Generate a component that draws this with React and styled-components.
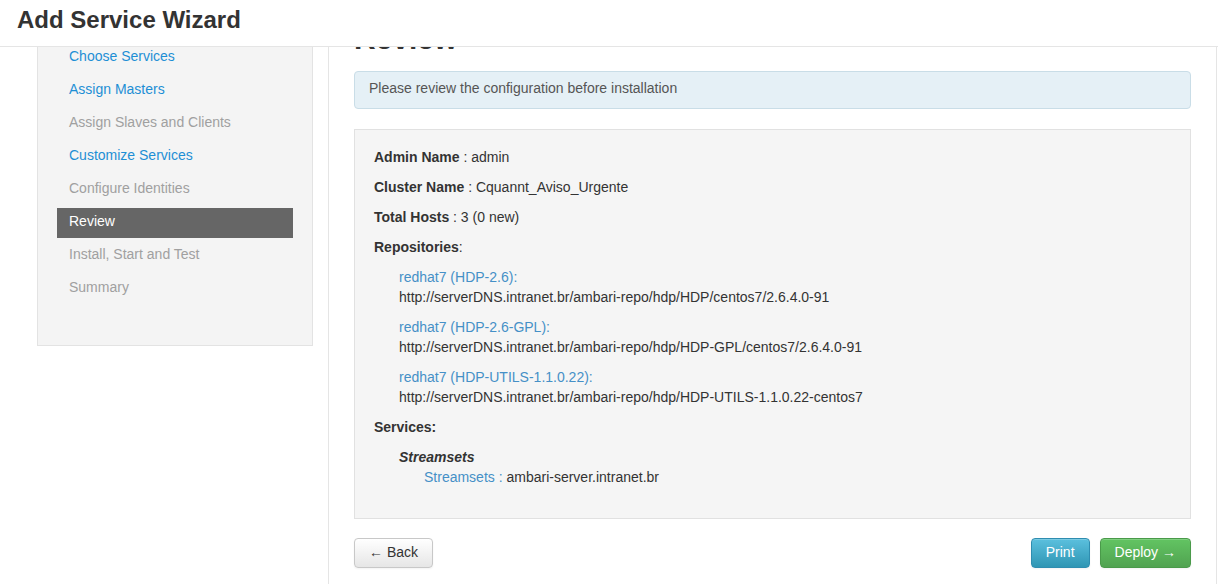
import React, { useLayoutEffect, useRef } from "react";
import styled, { createGlobalStyle } from "styled-components";

const GlobalStyle = createGlobalStyle`
  html, body {
    margin: 0;
    padding: 0;
    background: #fff;
    font-family: "Liberation Sans", Arial, sans-serif;
    font-size: 14px;
    line-height: 20px;
    color: #333;
  }
  * { box-sizing: border-box; }
`;

const steps = [
  { label: "Choose Services", state: "done" },
  { label: "Assign Masters", state: "done" },
  { label: "Assign Slaves and Clients", state: "disabled" },
  { label: "Customize Services", state: "done" },
  { label: "Configure Identities", state: "disabled" },
  { label: "Review", state: "active" },
  { label: "Install, Start and Test", state: "disabled" },
  { label: "Summary", state: "disabled" },
];

const repos = [
  {
    name: "redhat7 (HDP-2.6):",
    url: "http://serverDNS.intranet.br/ambari-repo/hdp/HDP/centos7/2.6.4.0-91",
  },
  {
    name: "redhat7 (HDP-2.6-GPL):",
    url: "http://serverDNS.intranet.br/ambari-repo/hdp/HDP-GPL/centos7/2.6.4.0-91",
  },
  {
    name: "redhat7 (HDP-UTILS-1.1.0.22):",
    url: "http://serverDNS.intranet.br/ambari-repo/hdp/HDP-UTILS-1.1.0.22-centos7",
  },
];

const App = () => {
  const scrollRef = useRef(null);

  // the wizard body is shown scrolled down a bit, under the fixed header
  useLayoutEffect(() => {
    if (scrollRef.current) scrollRef.current.scrollTop = 47;
  }, []);

  return (
    <Page>
      <GlobalStyle />
      <Header>
        <Title>Add Service Wizard</Title>
      </Header>
      <Scroller ref={scrollRef}>
        <Content>
          <Sidebar>
            <StepList>
              {steps.map((step) => (
                <Step key={step.label} state={step.state}>
                  {step.label}
                </Step>
              ))}
            </StepList>
          </Sidebar>
          <Panel>
            <Heading>Review</Heading>
            <Alert>Please review the configuration before installation</Alert>
            <ReviewBox>
              <Line>
                <b>Admin Name</b> : admin
              </Line>
              <Line>
                <b>Cluster Name</b> : Cquannt_Aviso_Urgente
              </Line>
              <Line>
                <b>Total Hosts</b> : 3 (0 new)
              </Line>
              <Line>
                <b>Repositories</b>:
              </Line>
              <Indent>
                {repos.map((repo) => (
                  <Repo key={repo.name}>
                    <RepoName>{repo.name}</RepoName>
                    <div>{repo.url}</div>
                  </Repo>
                ))}
              </Indent>
              <Line>
                <b>Services:</b>
              </Line>
              <Indent>
                <ServiceName>Streamsets</ServiceName>
                <Indent>
                  <RepoName as="span">Streamsets : </RepoName>
                  ambari-server.intranet.br
                </Indent>
              </Indent>
            </ReviewBox>
            <Actions>
              <Button>&larr; Back</Button>
              <RightActions>
                <Button variant="info">Print</Button>
                <Button variant="success">Deploy &rarr;</Button>
              </RightActions>
            </Actions>
          </Panel>
        </Content>
      </Scroller>
    </Page>
  );
};

export default App;

const Page = styled.div`
  height: 100vh;
  display: flex;
  flex-direction: column;
  overflow: hidden;
`;

const Header = styled.div`
  flex: 0 0 47px;
  display: flex;
  align-items: center;
  padding: 0 17px 6px;
  border-bottom: 1px solid #e5e5e5;
  background: #fff;
`;

const Title = styled.h1`
  margin: 0;
  font-size: 24px;
  line-height: 30px;
  font-weight: bold;
  color: #333;
`;

const Scroller = styled.div`
  flex: 1;
  overflow: hidden;
`;

const Content = styled.div`
  display: flex;
  align-items: flex-start;
  padding-top: 20px;
`;

const Sidebar = styled.div`
  flex: 0 0 276px;
  margin: 0 15px 0 37px;
  background: #f4f4f4;
  border: 1px solid #e3e3e3;
`;

const StepList = styled.ul`
  list-style: none;
  margin: 0;
  padding: 22px 19px 38px;
`;

const Step = styled.li`
  padding: 3px 12px 7px;
  margin-bottom: 3px;
  line-height: 20px;
  color: ${(p) =>
    p.state === "active" ? "#fff" : p.state === "done" ? "#1e8fd5" : "#a0a0a0"};
  background: ${(p) => (p.state === "active" ? "#666" : "transparent")};
`;

const Panel = styled.div`
  flex: 1;
  margin-right: 1px;
  min-height: 700px;
  padding: 2px 25px 0;
  border-left: 1px solid #e5e5e5;
  border-right: 1px solid #e5e5e5;
`;

const Heading = styled.h2`
  margin: 0 0 16px;
  font-size: 30px;
  line-height: 33px;
  font-weight: bold;
  color: #333;
`;

const Alert = styled.div`
  padding: 6px 14px 10px;
  background: #e5f0f6;
  border: 1px solid #c9dde7;
  border-radius: 4px;
  color: #555;
  margin-bottom: 20px;
`;

const ReviewBox = styled.div`
  background: #f5f5f5;
  border: 1px solid #e1e1e1;
  padding: 17px 19px 21px;
`;

const Line = styled.div`
  margin-bottom: 10px;
  & b {
    font-weight: bold;
  }
`;

const Indent = styled.div`
  padding-left: 25px;
  margin-bottom: 10px;
`;

const Repo = styled.div`
  margin-bottom: 10px;
  &:last-child {
    margin-bottom: 0;
  }
`;

const RepoName = styled.div`
  color: #4590c7;
`;

const ServiceName = styled.div`
  font-weight: bold;
  font-style: italic;
`;

const Actions = styled.div`
  display: flex;
  justify-content: space-between;
  margin-top: 19px;
`;

const RightActions = styled.div`
  display: flex;
  gap: 10px;
`;

const variants = {
  default: {
    color: "#333",
    top: "#ffffff",
    bottom: "#e6e6e6",
    border: "#c8c8c8",
  },
  info: {
    color: "#fff",
    top: "#5bc0de",
    bottom: "#2f96b4",
    border: "#2f8db0",
  },
  success: {
    color: "#fff",
    top: "#62c462",
    bottom: "#51a351",
    border: "#4a9a4a",
  },
};

const Button = styled.button`
  font-family: inherit;
  font-size: 14px;
  line-height: 20px;
  padding: 3px 14px 5px;
  height: 30px;
  border-radius: 4px;
  cursor: pointer;
  color: ${(p) => variants[p.variant || "default"].color};
  border: 1px solid ${(p) => variants[p.variant || "default"].border};
  background: linear-gradient(
    to bottom,
    ${(p) => variants[p.variant || "default"].top},
    ${(p) => variants[p.variant || "default"].bottom}
  );
  box-shadow: inset 0 1px 0 rgba(255, 255, 255, 0.2),
    0 1px 2px rgba(0, 0, 0, 0.05);
`;
